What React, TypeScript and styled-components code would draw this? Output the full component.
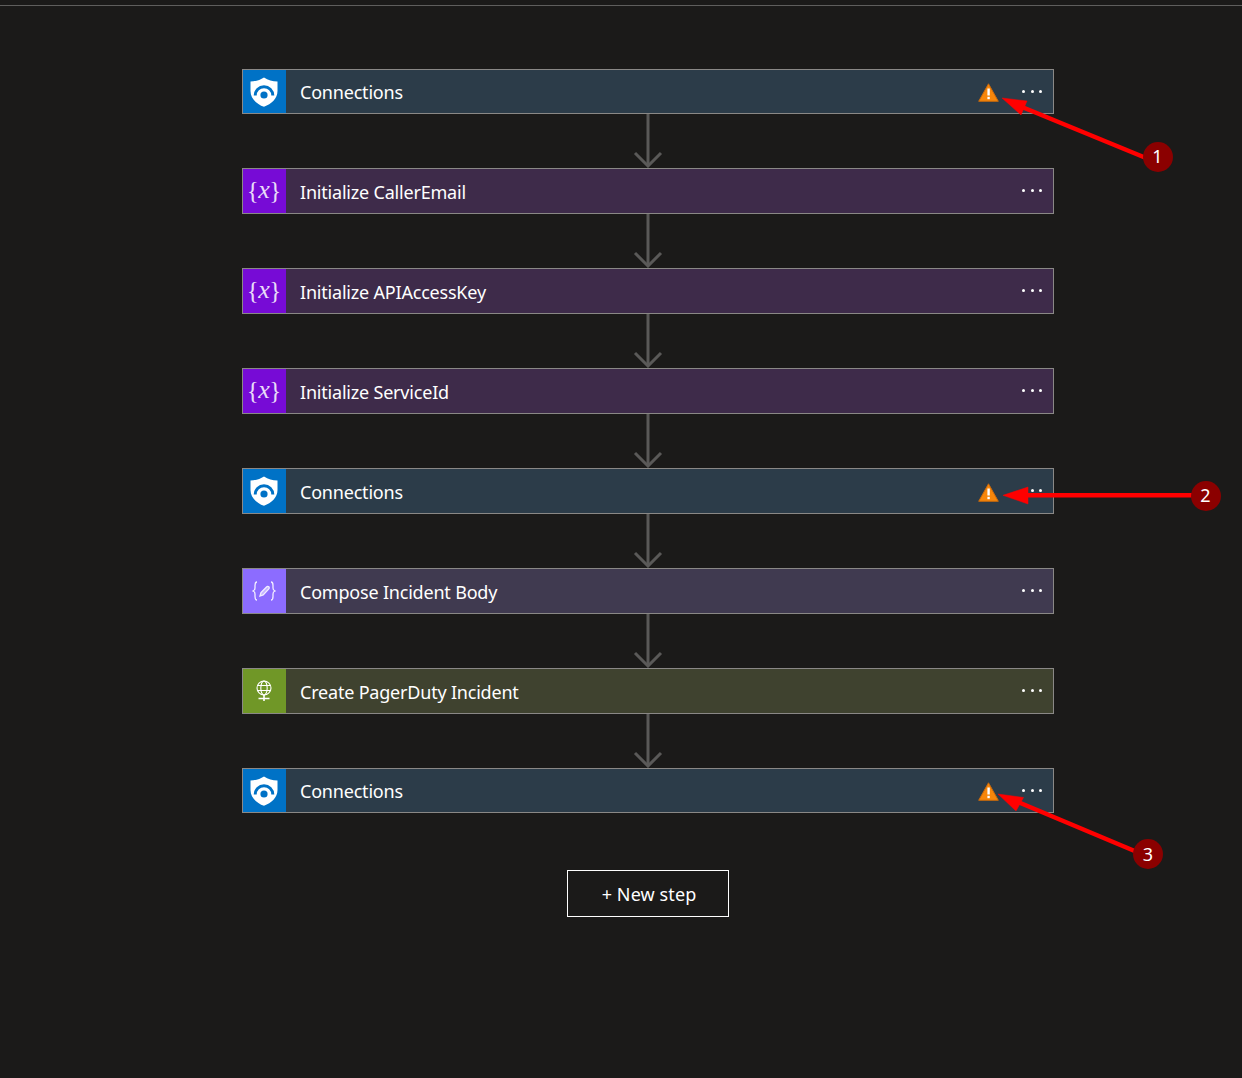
import styled, { createGlobalStyle } from "styled-components";

const GlobalStyle = createGlobalStyle`
  html, body {
    margin: 0;
    padding: 0;
    background: #1b1a19;
  }
`;

type Kind = "connection" | "variable" | "compose" | "http";

const palette: Record<Kind, { tile: string; body: string }> = {
  connection: { tile: "#0072c6", body: "#2c3c49" },
  variable: { tile: "#770bd6", body: "#3e2b4a" },
  compose: { tile: "#8c6cff", body: "#403a50" },
  http: { tile: "#709727", body: "#3f422f" },
};

const steps: { title: string; kind: Kind; warn?: boolean }[] = [
  { title: "Connections", kind: "connection", warn: true },
  { title: "Initialize CallerEmail", kind: "variable" },
  { title: "Initialize APIAccessKey", kind: "variable" },
  { title: "Initialize ServiceId", kind: "variable" },
  { title: "Connections", kind: "connection", warn: true },
  { title: "Compose Incident Body", kind: "compose" },
  { title: "Create PagerDuty Incident", kind: "http" },
  { title: "Connections", kind: "connection", warn: true },
];

const badges = [
  { n: 1, x: 1142.5, y: 141.5 },
  { n: 2, x: 1190.5, y: 480.5 },
  { n: 3, x: 1133, y: 839 },
];

function ShieldIcon() {
  return (
    <svg width="28" height="30" viewBox="0 0 28 30">
      <path
        fill="#fff"
        d="M14 0.5C18 3 22.5 4.5 27.5 4.5V14C27.5 21.5 21.5 27 14 29.8C6.5 27 0.5 21.5 0.5 14V4.5C5.5 4.5 10 3 14 0.5Z"
      />
      <path fill="none" stroke="#0072c6" strokeWidth="3" d="M5.2 18.5A8.8 8.8 0 0 1 22.8 18.5" />
      <circle cx="14" cy="18" r="3.6" fill="#0072c6" />
    </svg>
  );
}

function PencilBracesIcon() {
  return (
    <svg width="24" height="20" viewBox="0 0 24 20" fill="none" stroke="#f2eeff" strokeWidth="1.3">
      <path d="M5 1C3 1 3 2.5 3 4.5V7C3 8.5 2.2 9.6 1 10C2.2 10.4 3 11.5 3 13V15.5C3 17.5 3 19 5 19" />
      <path d="M19 1C21 1 21 2.5 21 4.5V7C21 8.5 21.8 9.6 23 10C21.8 10.4 21 11.5 21 13V15.5C21 17.5 21 19 19 19" />
      <path d="M8 15L9 11.5L14.5 6C15.3 5.2 16.2 5.2 16.8 5.8C17.4 6.4 17.4 7.3 16.6 8.1L11.2 13.9Z" fill="#f2eeff" fillOpacity="0.55" />
    </svg>
  );
}

function GlobeIcon() {
  return (
    <svg width="18" height="22" viewBox="0 0 18 22" fill="none" stroke="#fff" strokeWidth="1.1">
      <circle cx="9" cy="8" r="7" />
      <ellipse cx="9" cy="8" rx="3.2" ry="7" />
      <path d="M2.5 5.5H15.5M2.5 10.5H15.5" />
      <path d="M9 15V21M3.5 18.5H14.5" strokeWidth="1.6" />
    </svg>
  );
}

function WarningIcon() {
  return (
    <svg width="21" height="19" viewBox="0 0 21 19">
      <path d="M10.5 0.8L20.3 18.3H0.7Z" fill="#f7860a" stroke="#c9690c" strokeWidth="1" strokeLinejoin="round" />
      <rect x="9.4" y="5.5" width="2.4" height="7" fill="#fff" />
      <rect x="9.4" y="13.8" width="2.4" height="2.4" fill="#fff" />
    </svg>
  );
}

function StepIcon({ kind }: { kind: Kind }) {
  if (kind === "connection") return <ShieldIcon />;
  if (kind === "compose") return <PencilBracesIcon />;
  if (kind === "http") return <GlobeIcon />;
  return (
    <VariableGlyph>
      <span>{"{"}</span>
      <i>x</i>
      <span>{"}"}</span>
    </VariableGlyph>
  );
}

export default function App() {
  return (
    <>
      <GlobalStyle />
      <Page>
        <TopRule />
        <Flow>
          {steps.map((step, i) => (
            <StepGroup key={i}>
              {i > 0 && (
                <Connector>
                  <svg width="30" height="54" viewBox="0 0 30 54" fill="none" stroke="#5a5958" strokeWidth="3">
                    <path d="M15 0V52" />
                    <path d="M2 39L15 52L28 39" />
                  </svg>
                </Connector>
              )}
              <Card $kind={step.kind} $short={i === 0 || i === steps.length - 1}>
                <Tile $kind={step.kind}>
                  <StepIcon kind={step.kind} />
                </Tile>
                <Title>{step.title}</Title>
                {step.warn && (
                  <WarnSlot>
                    <WarningIcon />
                  </WarnSlot>
                )}
                <Dots>
                  <Dot />
                  <Dot />
                  <Dot />
                </Dots>
              </Card>
            </StepGroup>
          ))}
          <NewStep>+ New step</NewStep>
        </Flow>

        <Annotations width="1242" height="1078" viewBox="0 0 1242 1078">
          <g fill="#ff0000" stroke="#ff0000">
            <path d="M1022 107L1146 158" strokeWidth="4.5" />
            <path d="M1002 98L1027 101L1021 115Z" strokeWidth="0.5" />
            <path d="M1026 495.3H1194" strokeWidth="4.5" />
            <path d="M1003 495.3L1028 487V504Z" strokeWidth="0.5" />
            <path d="M1018 802L1137 852" strokeWidth="4.5" />
            <path d="M998 794L1023.5 797.5L1016 811Z" strokeWidth="0.5" />
          </g>
        </Annotations>
        {badges.map((b) => (
          <Badge key={b.n} $x={b.x} $y={b.y}>
            {b.n}
          </Badge>
        ))}
      </Page>
    </>
  );
}

const Page = styled.div`
  position: relative;
  width: 1242px;
  height: 1078px;
  overflow: hidden;
  background: #1b1a19;
  font-family: "Noto Sans", "Open Sans", sans-serif;
`;

const TopRule = styled.div`
  height: 1px;
  margin-top: 5px;
  background: #5f5e5d;
`;

const Flow = styled.div`
  display: flex;
  flex-direction: column;
  align-items: flex-start;
  padding: 63px 0 0 242px;
`;

const StepGroup = styled.div`
  display: flex;
  flex-direction: column;
  width: 812px;
`;

const Connector = styled.div`
  display: flex;
  justify-content: center;
  height: 54px;
  & > svg {
    display: block;
    margin-left: -1px;
  }
`;

const Card = styled.div<{ $kind: Kind; $short: boolean }>`
  display: flex;
  align-items: center;
  box-sizing: border-box;
  height: ${(p) => (p.$short ? 45 : 46)}px;
  border: 1px solid #8a8886;
  background: ${(p) => palette[p.$kind].body};
`;

const Tile = styled.div<{ $kind: Kind }>`
  display: flex;
  align-items: center;
  justify-content: center;
  flex: none;
  width: 43px;
  height: 100%;
  padding-right: 1px;
  box-sizing: border-box;
  background: ${(p) => palette[p.$kind].tile};
`;

const VariableGlyph = styled.span`
  display: flex;
  align-items: center;
  margin-top: -2px;
  color: #e8dcf8;
  font-family: "Liberation Serif", serif;
  font-size: 25px;
  line-height: 1;
  i {
    margin: -1px -0.5px 0;
    font-size: 26px;
  }
`;

const Title = styled.div`
  flex: 1;
  padding: 1px 0 0 14px;
  color: #fff;
  font-size: 18px;
  line-height: 24px;
  letter-spacing: -0.2px;
`;

const WarnSlot = styled.div`
  display: flex;
  margin: 2px 23px 0 0;
`;

const Dots = styled.div`
  display: flex;
  gap: 5.4px;
  margin: -1px 11px 0 0;
`;

const Dot = styled.span`
  width: 3px;
  height: 3px;
  border-radius: 50%;
  background: #fff;
`;

const NewStep = styled.div`
  display: flex;
  align-items: center;
  justify-content: center;
  box-sizing: border-box;
  width: 162px;
  height: 47px;
  margin: 57px 0 0 325px;
  padding: 0 0 0 2px;
  border: 1px solid #fff;
  color: #fff;
  font-size: 18px;
  letter-spacing: 0.1px;
`;

const Annotations = styled.svg`
  position: absolute;
  top: 0;
  left: 0;
  pointer-events: none;
`;

const Badge = styled.div<{ $x: number; $y: number }>`
  position: absolute;
  left: ${(p) => p.$x}px;
  top: ${(p) => p.$y}px;
  display: flex;
  align-items: center;
  justify-content: center;
  box-sizing: border-box;
  width: 30px;
  height: 30px;
  padding-bottom: 1px;
  border-radius: 50%;
  background: #8b0000;
  color: #fff;
  font-size: 18px;
`;
